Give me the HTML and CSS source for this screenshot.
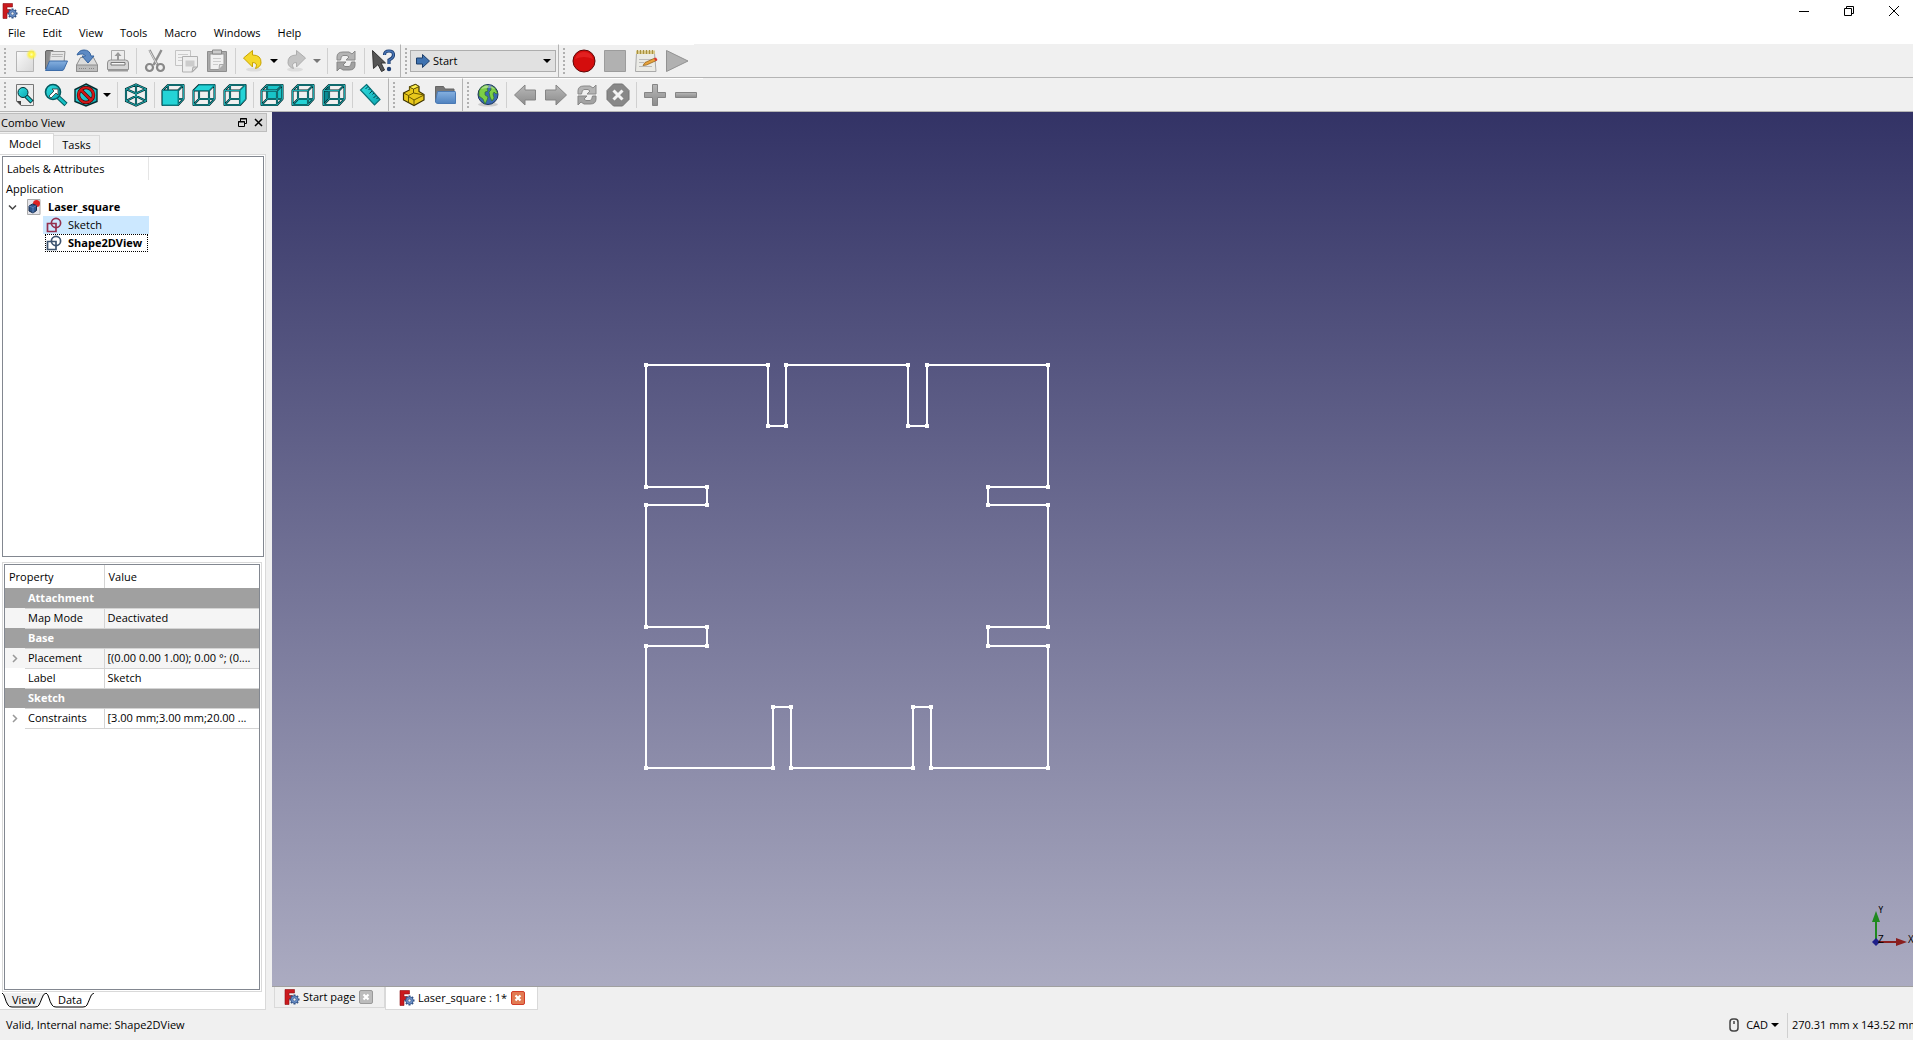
FILE: index.html
```html
<!DOCTYPE html>
<html lang="en">
<head>
    <meta charset="UTF-8">
    <meta name="viewport" content="width=device-width, initial-scale=1.0">
    <title>FreeCAD</title>
    <link rel="stylesheet" href="styles.css">
</head>
<body>
    <!-- Icons used more than once -->
    <svg class="defs" width="0" height="0">
        <defs>
            <linearGradient id="gray" x1="0" y1="0" x2="0" y2="1"><stop offset="0" stop-color="#b8b8b8"/><stop offset="1" stop-color="#8c8c8c"/></linearGradient>
            <linearGradient id="paper" x1="0" y1="0" x2="1" y2="1"><stop offset="0" stop-color="#fafafa"/><stop offset="1" stop-color="#d8d8d8"/></linearGradient>
            <linearGradient id="blue" x1="0" y1="0" x2="0" y2="1"><stop offset="0" stop-color="#85b0e0"/><stop offset="1" stop-color="#4f82bf"/></linearGradient>
            <linearGradient id="teal" x1="0" y1="0" x2="1" y2="1"><stop offset="0" stop-color="#34e0e2"/><stop offset="1" stop-color="#0aa6b0"/></linearGradient>
            <radialGradient id="glow"><stop offset="0" stop-color="#ffffb0"/><stop offset=".45" stop-color="#fff23a"/><stop offset="1" stop-color="#fff23a" stop-opacity="0"/></radialGradient>
        </defs>
        <symbol id="app" viewBox="0 0 16 16">
            <path d="M1 .5h9.500v3.500H5v2.500h3.500v3.500H5v5.500H1z" fill="#cb1a1e" stroke="#8a0f12" stroke-width=".6"/>
            <path d="M10.500 5.500v10M5.500 10.500h10M7 7l7 7M14 7l-7 7" stroke="#2f4f82" stroke-width="2"/>
            <circle cx="10.500" cy="10.500" r="3.700" fill="#6a90c8" stroke="#2f4f82" stroke-width=".6"/>
            <circle cx="10.500" cy="10.500" r="1.500" fill="#f0f0f0" stroke="#2f4f82" stroke-width=".6"/>
        </symbol>
        <symbol id="frame" viewBox="0 0 24 24">
            <path d="M7 16V2H22.500V16zM1.500 22 7 16M1.500 7.500H17V22H1.500zM1.500 7.500 7 2M17 7.500 22.500 2M17 22l5.500-6" fill="none" stroke="#052c30" stroke-width="2.100" stroke-linejoin="round"/>
            <path d="M7 16V2H22.500V16zM1.500 22 7 16M1.500 7.500H17V22H1.500zM1.500 7.500 7 2M17 7.500 22.500 2M17 22l5.500-6" fill="none" stroke="#1fb7ba" stroke-width=".9"/>
        </symbol>
        <symbol id="refresh" viewBox="0 0 24 24">
            <path d="M3 11V8q0-5 6-5h6l3 2 3-3v9h-9l3-3-2-1.500H9Q7 6.500 6.500 11z" fill="#b4b4b4" stroke="#8a8a8a"/>
            <path d="M21 13v3q0 5-6 5H9l-3-2-3 3v-9h9l-3 3 2 1.500h4q2 0 2.500-4.500z" fill="#a2a2a2" stroke="#858585"/>
        </symbol>
        <symbol id="sketch" viewBox="0 0 16 16">
            <path d="M1.500 6.500h8.500v8h-8.500z" fill="none" stroke="currentColor" stroke-width="1.700"/>
            <circle cx="10" cy="6" r="4.600" fill="none" stroke="currentColor" stroke-width="1.700"/>
        </symbol>
        <symbol id="caret" viewBox="0 0 8 4"><path d="M0 0h8L4 4z" fill="currentColor"/></symbol>
        <symbol id="close" viewBox="0 0 14 14"><path d="M4.500 4.500l5 5M9.500 4.500l-5 5" stroke="#fff" stroke-width="2.200"/></symbol>
    </svg>

    <header class="titlebar">
        <svg class="app-icon"><use href="#app"/></svg>
        <span class="title">FreeCAD</span>
        <button class="win-button" aria-label="Minimize"><svg width="10" height="10"><path d="M0 5.500h10" stroke="#000"/></svg></button>
        <button class="win-button" aria-label="Restore"><svg width="10" height="10"><path d="M2.500 2V.5h7v7H8M.5 2.500h7v7h-7z" fill="none" stroke="#000"/></svg></button>
        <button class="win-button" aria-label="Close"><svg width="10" height="10"><path d="M0 0l10 10M10 0L0 10" stroke="#000"/></svg></button>
    </header>

    <nav class="menubar">
        <a href="#">File</a>
        <a href="#">Edit</a>
        <a href="#">View</a>
        <a href="#">Tools</a>
        <a href="#">Macro</a>
        <a href="#">Windows</a>
        <a href="#">Help</a>
    </nav>

    <div class="toolbar-row">
        <div class="toolbar">
            <button class="tool" aria-label="New">
                <svg viewBox="0 0 24 24"><path d="M3.500 2.500h17v20h-17z" fill="url(#paper)" stroke="#b5b5b5"/><circle cx="18.500" cy="5.500" r="5.500" fill="url(#glow)"/></svg>
            </button>
            <button class="tool" aria-label="Open">
                <svg viewBox="0 0 24 24"><path d="M1.500 20V3q0-1.500 1.500-1.500h6L10.500 4H20v8" fill="#8b8b8b" stroke="#666"/><path d="M5.500 12l1-9.500H21L20 13" fill="#e6e6e6" stroke="#999"/><path d="M8 5.500h11M7.500 7.500h11" stroke="#b5b5b5"/><path d="M1.500 21.500l4-9.500h18l-3.500 8q-.5 1.500-2 1.500z" fill="url(#blue)" stroke="#3d6ca8"/></svg>
            </button>
            <button class="tool" aria-label="Save">
                <svg viewBox="0 0 24 24"><path d="M1.500 16l4-7.500h13l4 7.500v6.500h-21z" fill="#dcdcdc" stroke="#8e8e8e"/><path d="M1.500 16h21v6.500h-21z" fill="#bdbdbd" stroke="#8e8e8e"/><path d="M4 19.500h7M14 19.500h6" stroke="#888" stroke-dasharray="1 1"/><path d="M2 6Q4 1 9 1q6 0 7 6h3l-6 7-6-7h3.500Q9 3.500 2 6z" fill="#5d8ac4" stroke="#34639f"/></svg>
            </button>
            <button class="tool" aria-label="Print">
                <svg viewBox="0 0 24 24"><path d="M5.500 12V1.500h13V12" fill="#ededed" stroke="#aaa"/><path d="M12 3l3.500 4H13v5h-2V7H8.500z" fill="#999"/><path d="M1.500 14q0-3 3-3h15q3 0 3 3v6.500h-21z" fill="#d6d6d6" stroke="#909090"/><path d="M5 13.500h14v2.500H5z" fill="#f7f7f7" stroke="#777"/><path d="M2 21.500h20" stroke="#9a9a9a" stroke-width="2"/></svg>
            </button>
            <span class="separator"></span>
            <button class="tool" aria-label="Cut">
                <svg viewBox="0 0 24 24"><path d="M6.500 1l8 15M18.500 1l-8 15" stroke="#8f8f8f" stroke-width="2.400"/><path d="M6.500 1.500l7.500 14" stroke="#ddd"/><circle cx="6.500" cy="18.500" r="3.500" fill="none" stroke="#888" stroke-width="2.200"/><circle cx="17.500" cy="18.500" r="3.500" fill="none" stroke="#888" stroke-width="2.200"/></svg>
            </button>
            <button class="tool" aria-label="Copy">
                <svg viewBox="0 0 24 24"><path d="M1.500 1.500h15v15h-15z" fill="#f2f2f2" stroke="#c4c4c4"/><path d="M4 5.500h10M4 8.500h5M4 11.500h5" stroke="#ccc"/><path d="M8.500 7.500h15V18l-5 5h-10z" fill="#eee" stroke="#b0b0b0"/><path d="M11.500 11.500h9v6h-9z" fill="#ccc"/><path d="M18 23l1-5h4z" fill="#d8d8d8" stroke="#aaa"/></svg>
            </button>
            <button class="tool" aria-label="Paste">
                <svg viewBox="0 0 24 24"><path d="M2.500 2.500h19v20h-19z" fill="#aaa" stroke="#8e8e8e"/><path d="M5 5h14v10l-5 5.500H5z" fill="#f1f1f1" stroke="#999"/><path d="M7.500 1h9v4h-9z" fill="#ccc" stroke="#888"/><path d="M8 9.500h8M8 12.500h8M8 15.500h5" stroke="#ccc"/><path d="M14 20.500l.5-5H19z" fill="#ddd" stroke="#aaa"/></svg>
            </button>
            <span class="separator"></span>
            <button class="tool split" aria-label="Undo">
                <svg viewBox="0 0 24 24"><ellipse cx="13" cy="20.500" rx="8" ry="2" fill="#ddd"/><path d="M2.500 9l9-7.500v4.500q9 0 8.500 8-.5 4-5.500 5.500 3-6-3-6V18z" fill="#f5d82a" stroke="#c9a400"/></svg>
                <svg class="caret"><use href="#caret"/></svg>
            </button>
            <button class="tool split disabled" aria-label="Redo">
                <svg viewBox="0 0 24 24"><ellipse cx="11" cy="20.500" rx="8" ry="2" fill="#ddd"/><path d="M21.500 9l-9-7.500v4.500Q3.500 6 4 14q.5 4 5.500 5.500-3-6 3-6V18z" fill="#c4c4c4" stroke="#adadad"/></svg>
                <svg class="caret"><use href="#caret"/></svg>
            </button>
            <span class="separator"></span>
            <button class="tool" aria-label="Refresh"><svg><use href="#refresh"/></svg></button>
            <span class="separator"></span>
            <button class="tool" aria-label="What's this?">
                <svg viewBox="0 0 24 24"><path d="M1.500 1.500l13 12.500H10l3.500 7-3 1.500-3.500-7-4.500 4z" fill="#555" stroke="#333"/><path d="M13.500 6q0-4 4.500-4t4.500 4q0 3-4.500 5v4" fill="none" stroke="#1f3f73" stroke-width="3.200"/><path d="M13.500 6q0-4 4.500-4t4.500 4q0 3-4.500 5v4" fill="none" stroke="#4a78b8" stroke-width="1.300"/><circle cx="18" cy="20" r="2.200" fill="#1f3f73"/></svg>
            </button>
        </div>
        <div class="toolbar">
            <div class="workbench">
                <select aria-label="Workbench"><option>Start</option></select>
                <svg class="workbench-icon" viewBox="0 0 16 16"><path d="M1.500 5h6V1.500l7 6.500-7 6.500V11h-6z" fill="#3f72b0" stroke="#1d3f6b"/></svg>
                <svg class="caret workbench-caret"><use href="#caret"/></svg>
            </div>
        </div>
        <div class="toolbar">
            <button class="tool" aria-label="Record macro"><svg viewBox="0 0 24 24"><circle cx="12" cy="12" r="11" fill="#d40d0d" stroke="#5e0808"/><path d="M3 10q2-7 9-7t9 7q-9-4-18 0z" fill="#e82a2a" opacity=".7"/></svg></button>
            <button class="tool" aria-label="Stop macro"><svg viewBox="0 0 24 24"><path d="M1.500 1.500h21v21h-21z" fill="#b1b1b1" stroke="#9c9c9c"/></svg></button>
            <button class="tool" aria-label="Edit macros">
                <svg viewBox="0 0 24 24"><path d="M2.500 4h18l1.500 18.500H1.500z" fill="#ebebe6" stroke="#aaa"/><path d="M2 1.500h19v3.500H2z" fill="#d8c888"/><path d="M3.500 1v4M6.500 1v4M9.500 1v4M12.500 1v4M15.500 1v4M18.500 1v4" stroke="#a89040"/><path d="M5 10.500h13M5 13.500h5M5 17.500h13" stroke="#bbb"/><path d="M9 16.500l2-3 10-4.500 1.500 2.500-10 4.500z" fill="#e8a33c" stroke="#8a5a14" stroke-width=".7"/><path d="M20 9.500l2-1 1.500 2.500-2 1z" fill="#d33"/></svg>
            </button>
            <button class="tool" aria-label="Run macro"><svg viewBox="0 0 24 24"><path d="M1.500 1.500L23 12 1.500 22.500z" fill="#b1b1b1" stroke="#929292"/></svg></button>
        </div>
    </div>

    <div class="toolbar-row">
        <div class="toolbar">
            <button class="tool" aria-label="Fit all">
                <svg viewBox="0 0 24 24"><path d="M3.500 1.500h17v21H8l-4.500-4.500z" fill="#ededed" stroke="#777"/><path d="M3.500 18H8v4.500z" fill="#444"/><path d="M13 13l6 6" stroke="#052c30" stroke-width="4.500"/><path d="M13 13l5.500 5.500" stroke="#16c0c4" stroke-width="2.500"/><circle cx="10" cy="9.500" r="5" fill="url(#teal)" stroke="#052c30"/></svg>
            </button>
            <button class="tool" aria-label="Fit selection">
                <svg viewBox="0 0 24 24"><path d="M14 14l8 7.500" stroke="#045b60" stroke-width="4.500"/><path d="M14 14l7.500 7" stroke="#16c0c4" stroke-width="2.500"/><circle cx="9" cy="9" r="7.500" fill="url(#teal)" stroke="#045b60" stroke-width="1.600"/><path d="M5 13l5-5-2-2h6v6l-2-2-5 5z" fill="#fff" stroke="#333" stroke-width=".8"/></svg>
            </button>
            <button class="tool split" aria-label="Draw style">
                <svg viewBox="0 0 24 24"><path d="M12 1l11 5.500v12L12 23 1 18.500v-12z" fill="url(#teal)" stroke="#052c30" stroke-width="1.400"/><circle cx="12" cy="12" r="7.500" fill="none" stroke="#4d0000" stroke-width="3.400"/><path d="M7 7l10 10" stroke="#4d0000" stroke-width="3.400"/><circle cx="12" cy="12" r="7.500" fill="none" stroke="#d31818" stroke-width="2.200"/><path d="M7 7l10 10" stroke="#d31818" stroke-width="2.200"/></svg>
                <svg class="caret"><use href="#caret"/></svg>
            </button>
            <span class="separator"></span>
            <button class="tool" aria-label="Isometric">
                <svg viewBox="0 0 24 24"><path d="M12 1.500l10 4.500v12l-10 4.500L2 18V6zM2 6l10 4.500L22 6M12 10.500v12M2 18l10-5 10 5M12 1.500v9" fill="none" stroke="#052c30" stroke-width="2.100"/><path d="M12 1.500l10 4.500v12l-10 4.500L2 18V6zM2 6l10 4.500L22 6M12 10.500v12M2 18l10-5 10 5M12 1.500v9" fill="none" stroke="#1fb7ba" stroke-width=".9"/></svg>
            </button>
            <span class="separator"></span>
            <button class="tool" aria-label="Front"><svg viewBox="0 0 24 24"><use href="#frame"/><path d="M1.500 7.500H17V22H1.500z" fill="#24d3d6" stroke="#087f85"/></svg></button>
            <button class="tool" aria-label="Top"><svg viewBox="0 0 24 24"><use href="#frame"/><path d="M1.500 7.500L7 2h15.500L17 7.500z" fill="#24d3d6" stroke="#087f85"/></svg></button>
            <button class="tool" aria-label="Right"><svg viewBox="0 0 24 24"><use href="#frame"/><path d="M17 7.500L22.500 2v14L17 22z" fill="#24d3d6" stroke="#087f85"/></svg></button>
            <span class="separator"></span>
            <button class="tool" aria-label="Rear"><svg viewBox="0 0 24 24"><path d="M7 2h15.500v14H7z" fill="#18c4c8"/><use href="#frame"/></svg></button>
            <button class="tool" aria-label="Bottom"><svg viewBox="0 0 24 24"><path d="M1.500 22L7 16h15.500L17 22z" fill="#24d3d6"/><use href="#frame"/></svg></button>
            <button class="tool" aria-label="Left"><svg viewBox="0 0 24 24"><path d="M1.500 7.500L7 2v14l-5.500 6z" fill="#0a8c94"/><use href="#frame"/></svg></button>
            <span class="separator"></span>
            <button class="tool" aria-label="Measure distance">
                <svg viewBox="0 0 24 24"><path d="M7.500 1.500L21 16.500 15.500 22 1.500 7z" fill="url(#teal)" stroke="#087078" stroke-width="1.200"/><path d="M9 3.500L6.500 6M11 5.500L9.500 7M13 8l-2.500 2.500M15 10l-1.500 1.500M17 12.500L14.500 15M19 14.500L17.500 16" stroke="#053f45"/></svg>
            </button>
        </div>
        <div class="toolbar">
            <button class="tool" aria-label="Part">
                <svg viewBox="0 0 24 24"><path d="M1.500 10l6-3V4l6-2.500 3.500 2v5l5 3v5.500l-10 5.500L1.500 17z" fill="#e8c81c" stroke="#3d3300" stroke-width="1.200"/><path d="M1.500 10l5 2.500 5-2.500 10.500 2M7.500 7V4l4 2 5.500-2.500M11.500 6v4M6.500 12.500v6.500M12 17v5.500M6.500 13.500L12 17l10-5" fill="none" stroke="#6b5900"/><path d="M7.500 4l6-2.500 3.500 2L11.500 6z" fill="#fff04e" stroke="#3d3300" stroke-width=".6"/></svg>
            </button>
            <button class="tool" aria-label="Group">
                <svg viewBox="0 0 24 24"><path d="M2.500 19V3.500h8L12 6h9v4" fill="#777" stroke="#666"/><path d="M4.500 8.500H22q.5 0 .5 1v11H5q-2.500 0-2.500-2z" fill="url(#blue)" stroke="#4a7ab5"/></svg>
            </button>
        </div>
        <div class="toolbar">
            <button class="tool" aria-label="Open website">
                <svg viewBox="0 0 24 24"><ellipse cx="12" cy="21.500" rx="10" ry="2" fill="#ccc"/><circle cx="12" cy="11.500" r="10" fill="#3a6bb0" stroke="#1b355e"/><path d="M3 8q2-5 7-6l3 1-2 3 1 2-3 1v3l3 2-1 3-2 4-2-5-4-3zM15 3l4 2 2.500 5-1.500 1-2-2-1 2 1 4-2 3-2-4-1-5 2-2z" fill="#7ccf46" stroke="#2c6a1c" stroke-width=".6"/><path d="M5 6q3-4 7-4t7 4q-7-2-14 0z" fill="#fff" opacity=".35"/></svg>
            </button>
            <span class="separator"></span>
            <button class="tool" aria-label="Previous page"><svg viewBox="0 0 24 24"><path d="M1.500 12L12 2v5h10.500v10H12v5z" fill="url(#gray)" stroke="#858585"/></svg></button>
            <button class="tool" aria-label="Next page"><svg viewBox="0 0 24 24"><path d="M22.500 12L12 2v5H1.500v10H12v5z" fill="url(#gray)" stroke="#858585"/></svg></button>
            <button class="tool" aria-label="Refresh page"><svg><use href="#refresh"/></svg></button>
            <button class="tool" aria-label="Stop loading"><svg viewBox="0 0 24 24"><path d="M7.500 1h9L23 7.500v9L16.500 23h-9L1 16.500v-9z" fill="#888" stroke="#747474"/><path d="M7.500 7.500l9 9M16.500 7.500l-9 9" stroke="#f4f4f4" stroke-width="3"/></svg></button>
            <span class="separator"></span>
            <button class="tool" aria-label="Zoom in"><svg viewBox="0 0 24 24"><path d="M9.500 1.500h5v8h8v5h-8v8h-5v-8h-8v-5h8z" fill="url(#gray)" stroke="#858585"/></svg></button>
            <button class="tool" aria-label="Zoom out"><svg viewBox="0 0 24 24"><path d="M1.500 9.500h21v5h-21z" fill="url(#gray)" stroke="#858585"/></svg></button>
        </div>
    </div>

    <main class="workspace">
        <aside class="combo-view">
            <div class="dock-title">
                <span>Combo View</span>
                <button aria-label="Float"><svg width="9" height="9"><path d="M2.500 3V.5h6v5H6M2 1h7M.5 3.500h6v5h-6zM0 4h7" fill="none" stroke="#000"/></svg></button>
                <button aria-label="Close"><svg width="9" height="9"><path d="M1 1l7 7M8 1L1 8" stroke="#000" stroke-width="1.500"/></svg></button>
            </div>
            <div class="top-tabs">
                <button class="active">Model</button>
                <button>Tasks</button>
            </div>
            <div class="tab-panel">
                <section class="tree">
                    <div class="tree-header">Labels &amp; Attributes</div>
                    <ul>
                        <li class="root">Application</li>
                        <li class="document">
                            <svg class="chevron" viewBox="0 0 9 9"><path d="M1 2.500l3.500 3.500L8 2.500" fill="none" stroke="#444" stroke-width="1.500"/></svg>
                            <svg class="node-icon" viewBox="0 0 16 16"><path d="M1.500.5h12.500v15H1.500z" fill="#e4e4ea" stroke="#aaa"/><circle cx="10.500" cy="4.500" r="3.500" fill="#d22"/><path d="M3 7l3.500-2 4 1.500v5L7 14l-4-2z" fill="#2f568c" stroke="#14294a"/><path d="M3 7l4 1.500 3.500-2M7 8.500V14" fill="none" stroke="#6c93c8" stroke-width=".7"/></svg>
                            <span>Laser_square</span>
                        </li>
                        <li class="object selected">
                            <svg class="node-icon sketch"><use href="#sketch"/></svg>
                            <span>Sketch</span>
                        </li>
                        <li class="object current">
                            <svg class="node-icon shape"><use href="#sketch"/></svg>
                            <span>Shape2DView</span>
                        </li>
                    </ul>
                </section>

                <section class="property-frame">
                    <div class="property-view">
                        <table>
                            <colgroup>
                                <col class="col-expand">
                                <col class="col-name">
                                <col>
                            </colgroup>
                            <thead>
                                <tr><th colspan="2">Property</th><th>Value</th></tr>
                            </thead>
                            <tbody>
                                <tr class="group"><td></td><td colspan="2">Attachment</td></tr>
                                <tr class="alt"><td></td><td>Map Mode</td><td>Deactivated</td></tr>
                                <tr class="group"><td></td><td colspan="2">Base</td></tr>
                                <tr class="alt"><td><svg class="chevron" viewBox="0 0 9 9"><path d="M3 1l3.500 3.500L3 8" fill="none" stroke="#999" stroke-width="1.500"/></svg></td><td>Placement</td><td>[(0.00 0.00 1.00); 0.00 °; (0....</td></tr>
                                <tr><td></td><td>Label</td><td>Sketch</td></tr>
                                <tr class="group"><td></td><td colspan="2">Sketch</td></tr>
                                <tr><td><svg class="chevron" viewBox="0 0 9 9"><path d="M3 1l3.500 3.500L3 8" fill="none" stroke="#999" stroke-width="1.500"/></svg></td><td>Constraints</td><td>[3.00 mm;3.00 mm;20.00 ...</td></tr>
                            </tbody>
                        </table>
                    </div>
                </section>
                <div class="bottom-tabs">
                    <button>
                        <svg viewBox="0 0 44 15"><path d="M0 0q2 1 3 5t3 7q1 2 4 2h23q3 0 4-2t3-7q1-4 4-5" fill="#f0f0f0" stroke="#000"/></svg>
                        <span>View</span>
                    </button>
                    <button>
                        <svg viewBox="0 0 48 15"><path d="M0 0q2 1 3 5t3 7q1 2 4 2h27q3 0 4-2t3-7q1-4 4-5" fill="#fff" stroke="#000"/></svg>
                        <span>Data</span>
                    </button>
                </div>
            </div>
        </aside>

        <div class="mdi">
            <div class="viewport">
                <svg class="scene">
                    <!-- Outline of the laser cut square -->
                    <path class="edge" d="M374 253h122v61h18v-61h122v61h19v-61h121v122h-60v18h60v122h-60v19h60v122H659v-61h-18v61H519v-61h-18v61H374V534h61v-19h-61V393h61v-18h-61z"/>
                    <path class="vertex" d="M374 253h0M496 253h0M496 314h0M514 314h0M514 253h0M636 253h0M636 314h0M655 314h0M655 253h0M776 253h0M776 375h0M716 375h0M716 393h0M776 393h0M776 515h0M716 515h0M716 534h0M776 534h0M776 656h0M659 656h0M659 595h0M641 595h0M641 656h0M519 656h0M519 595h0M501 595h0M501 656h0M374 656h0M374 534h0M435 534h0M435 515h0M374 515h0M374 393h0M435 393h0M435 375h0M374 375h0"/>
                </svg>
                <svg class="axis-cross" viewBox="0 0 48 48">
                    <path d="M11 36V14" stroke="#1f8a1f" stroke-width="2"/>
                    <path d="M11 5l4 11H7z" fill="#1f8a1f"/>
                    <path d="M11 36h20" stroke="#8a1f1f" stroke-width="2"/>
                    <path d="M42 36l-11-4v8z" fill="#8a1f1f"/>
                    <path d="M11 32l4 4-4 4-4-4z" fill="#1f1f8a"/>
                    <text x="13" y="7">Y</text>
                    <text x="13" y="37">Z</text>
                    <text x="43" y="37">X</text>
                </svg>
            </div>
            <div class="doc-tabs">
                <div class="doc-tab">
                    <svg class="app-icon"><use href="#app"/></svg>
                    <span>Start page</span>
                    <button aria-label="Close Start page"><svg><use href="#close"/></svg></button>
                </div>
                <div class="doc-tab active">
                    <svg class="app-icon"><use href="#app"/></svg>
                    <span>Laser_square : 1*</span>
                    <button aria-label="Close Laser_square"><svg><use href="#close"/></svg></button>
                </div>
            </div>
        </div>
    </main>

    <footer class="statusbar">
        <span class="message">Valid, Internal name: Shape2DView</span>
        <button class="nav-style">
            <svg width="10" height="14" viewBox="0 0 10 14"><rect x="1" y="1" width="8" height="12" rx="3" fill="none" stroke="#444" stroke-width="1.500"/><path d="M5 3v3" stroke="#444" stroke-width="1.500"/></svg>
            CAD
            <svg class="caret"><use href="#caret"/></svg>
        </button>
        <span class="dimensions">270.31 mm x 143.52 mm</span>
    </footer>
</body>
</html>
```
FILE: styles.css
```css
* {
    box-sizing: border-box;
}

body {
    margin: 0;
    height: 100vh;
    display: flex;
    flex-direction: column;
    overflow: hidden;
    background-color: #f0f0f0;
    color: #000;
    font-family: "Open Sans", "Noto Sans", sans-serif;
    font-size: 11px;
    line-height: 16px;
}

button,
select {
    font: inherit;
    color: inherit;
    border: 0;
    padding: 0;
    background: none;
}

svg {
    display: block;
    flex: none;
}

.defs {
    position: absolute;
}

.app-icon {
    width: 16px;
    height: 16px;
}

.caret {
    width: 8px;
    height: 4px;
}

/* Title and menu */
.titlebar {
    display: flex;
    align-items: center;
    gap: 7px;
    height: 22px;
    padding-left: 2px;
    background-color: #fff;
}

.title {
    flex: 1;
}

.win-button {
    display: flex;
    align-items: center;
    justify-content: center;
    width: 38px;
    height: 20px;
}

.menubar {
    display: flex;
    gap: 17px;
    height: 22px;
    padding: 3px 8px;
    background-color: #fff;
}

.menubar a {
    color: #000;
    text-decoration: none;
}

/* Toolbars */
.toolbar-row {
    display: flex;
    height: 34px;
    border-bottom: 1px solid #b4b4b4;
}

.toolbar {
    display: flex;
    align-items: center;
    padding-right: 2px;
    border-top: 1px solid #fff;
    border-right: 1px solid #b4b4b4;
}

.toolbar::before {
    content: "";
    width: 2px;
    height: 26px;
    margin: 0 3px 0 4px;
    background: repeating-linear-gradient(#b0b0b0 0 2px, transparent 2px 4px);
}

.toolbar:last-child {
    border-right: 0;
}

.tool {
    display: flex;
    align-items: center;
    justify-content: center;
    width: 31px;
    height: 30px;
}

.tool svg {
    width: 24px;
    height: 24px;
}

.tool.split {
    width: 43px;
    gap: 5px;
}

.tool .caret {
    width: 8px;
    height: 4px;
}

.tool.disabled {
    color: #777;
}

.separator {
    width: 1px;
    height: 26px;
    margin: 0 2px 0 3px;
    background-color: #d0d0d0;
}

.workbench {
    position: relative;
    width: 146px;
}

.workbench select {
    display: block;
    width: 100%;
    height: 22px;
    padding-left: 22px;
    appearance: none;
    background-color: #e1e1e1;
    border: 1px solid #adadad;
}

.workbench-icon {
    position: absolute;
    left: 5px;
    top: 3px;
    width: 16px;
    height: 16px;
}

.workbench-caret {
    position: absolute;
    right: 5px;
    top: 9px;
}

/* Main area */
.workspace {
    flex: 1;
    display: flex;
    min-height: 0;
}

.combo-view {
    display: flex;
    flex-direction: column;
    width: 272px;
    padding: 1px 5px 0 0;
}

.dock-title {
    display: flex;
    align-items: center;
    height: 19px;
    padding: 0 3px 0 1px;
    background-color: #dadada;
    border: 1px solid #bdbdbd;
    border-left: 0;
}

.dock-title span {
    flex: 1;
}

.dock-title button {
    margin-left: 7px;
}

.top-tabs {
    display: flex;
    align-items: flex-end;
    height: 22px;
}

.top-tabs button {
    width: 46px;
    height: 19px;
    border: 1px solid #d9d9d9;
    border-width: 1px 1px 0 0;
}

.top-tabs .active {
    width: 54px;
    height: 21px;
    padding-right: 3px;
    background-color: #fff;
}

.tab-panel {
    flex: 1;
    display: flex;
    flex-direction: column;
    min-height: 0;
    margin-right: 1px;
    padding: 1px 1px 2px 2px;
    background-color: #fff;
    border: 1px solid #d9d9d9;
    border-left: 0;
}

.tree {
    flex: 0 0 401px;
    background-color: #fff;
    border: 1px solid #828790;
}

.tree-header {
    width: 146px;
    height: 23px;
    padding: 4px;
    line-height: 15px;
    border-right: 1px solid #e5e5e5;
}

.tree ul {
    margin: 0;
    padding: 0;
    list-style: none;
}

.tree li {
    display: flex;
    align-items: center;
    height: 18px;
}

.tree .root {
    padding-left: 3px;
}

.tree .document {
    padding-left: 5px;
    font-weight: bold;
}

.tree .document .node-icon {
    margin: 0 6px 0 9px;
}

.tree .object {
    width: 106px;
    margin-left: 40px;
    padding-left: 3px;
    gap: 6px;
}

.tree .selected {
    background-color: #cce8ff;
}

.tree .current {
    width: 103px;
    margin-left: 42px;
    padding-left: 0;
    border: 1px dotted #000;
    font-weight: bold;
}

.chevron {
    width: 9px;
    height: 9px;
}

.node-icon {
    width: 16px;
    height: 16px;
}

.sketch {
    color: #94304e;
}

.shape {
    color: #3d5470;
}

.property-frame {
    flex: 1;
    min-height: 0;
    margin: 5px 2px 0 0;
    padding: 1px;
    border: 1px solid #d9d9d9;
}

.property-view {
    height: 100%;
    background-color: #fff;
    border: 1px solid #828790;
}

.property-view table {
    width: 100%;
    table-layout: fixed;
    border-collapse: collapse;
}

.col-expand {
    width: 20px;
}

.col-name {
    width: 79px;
}

.property-view th,
.property-view td {
    height: 20px;
    padding: 0 3px;
    border-bottom: 1px solid #d4d4d4;
    text-align: left;
    font-weight: normal;
    white-space: nowrap;
}

.property-view th {
    height: 23px;
    padding-left: 4px;
    border-bottom: 0;
}

.property-view th:last-child,
.property-view td:nth-child(3) {
    border-left: 1px solid #d4d4d4;
}

.property-view td:first-child {
    padding-left: 5px;
    border-bottom: 0;
}

.property-view .group td {
    background-color: #a0a0a0;
    color: #fff;
    font-weight: bold;
}

.property-view .alt td {
    background-color: #f5f5f5;
}

.bottom-tabs {
    display: flex;
    height: 15px;
}

.bottom-tabs button {
    display: grid;
    place-items: center;
}

.bottom-tabs svg,
.bottom-tabs span {
    grid-area: 1 / 1;
}

.bottom-tabs svg {
    height: 15px;
}

/* 3D view */
.mdi {
    flex: 1;
    display: flex;
    flex-direction: column;
    min-width: 0;
}

.viewport {
    position: relative;
    flex: 1;
    overflow: hidden;
    background: linear-gradient(#333366, #ababc1);
    border-bottom: 1px solid #a0a0a0;
}

.scene {
    width: 100%;
    height: 100%;
}

.edge {
    fill: none;
    stroke: #fff;
    stroke-width: 2;
}

.vertex {
    fill: none;
    stroke: #fff;
    stroke-width: 4;
    stroke-linecap: square;
}

.axis-cross {
    position: absolute;
    right: 0;
    bottom: 32px;
    width: 48px;
    height: 48px;
    font-size: 10px;
}

.doc-tabs {
    display: flex;
    align-items: flex-start;
    height: 23px;
    padding-left: 2px;
}

.doc-tab {
    display: flex;
    align-items: center;
    width: 111px;
    height: 21px;
    padding-left: 9px;
    border: 1px solid #d9d9d9;
    border-top: 0;
}

.doc-tab.active {
    width: 153px;
    height: 23px;
    padding-left: 13px;
    background-color: #fff;
}

.doc-tab span {
    padding: 0 4px 0 3px;
    white-space: nowrap;
}

.doc-tab button {
    width: 14px;
    height: 14px;
    background-color: #bcbcbc;
    border: 1px solid #9a9a9a;
    border-radius: 2px;
}

.doc-tab button svg {
    width: 14px;
    height: 14px;
    margin: -1px;
}

.doc-tab.active button {
    background-color: #e27a52;
    border-color: #d13c28;
}

/* Status bar */
.statusbar {
    display: flex;
    align-items: center;
    height: 30px;
    padding-left: 6px;
}

.message {
    flex: 1;
}

.nav-style {
    display: flex;
    align-items: center;
    gap: 7px;
    height: 25px;
    padding-right: 8px;
    border-right: 1px solid #d0d0d0;
}

.nav-style .caret {
    margin-left: -4px;
}

.dimensions {
    width: 125px;
    padding-left: 4px;
    overflow: hidden;
    white-space: nowrap;
}
```
